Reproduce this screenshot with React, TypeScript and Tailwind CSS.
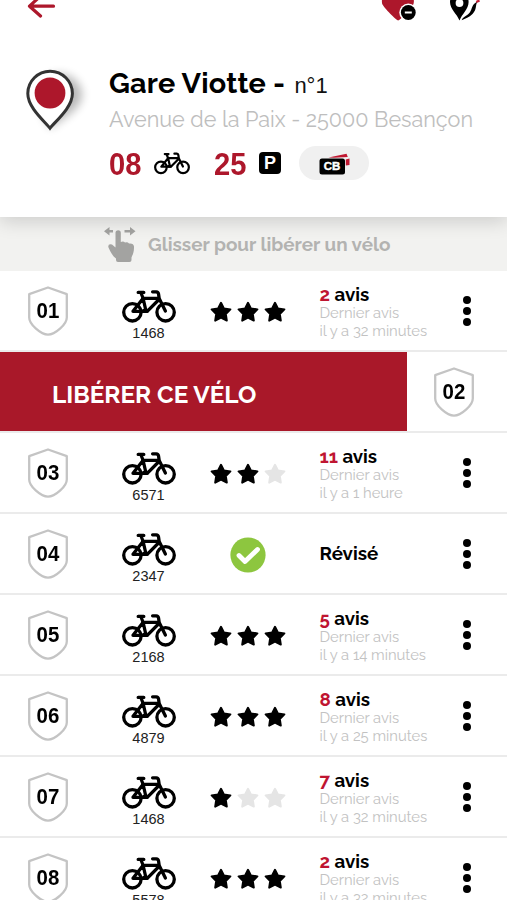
import React from "react";

const raleway = "font-['Raleway','Lato',sans-serif]";

function Bike({ className }: { className: string }) {
  return (
    <svg viewBox="0 0 54 33" className={className} fill="none" stroke="#000" strokeWidth="3.3" strokeLinecap="round" strokeLinejoin="round">
      <circle cx="10.4" cy="22.3" r="8.7" />
      <circle cx="43.6" cy="22.3" r="8.7" />
      <path d="M16.2 2.4h5.6M19 3L21 8 24 21M20.5 8.4H36.5M36.5 10L25.2 21.3H11L20.2 9.5M30.6 1.8h3.6q2 .2 2.3 2L37.2 8.5l6.2 12.5" />
      <path d="M22 20.8h3" strokeWidth="4.2" />
    </svg>
  );
}

function Shield({ n }: { n: string }) {
  return (
    <div className="grid h-[50px] w-10 shrink-0 place-items-center">
      <svg viewBox="0 0 40 50" className="col-start-1 row-start-1 h-[50px] w-10" fill="none" stroke="#c4c4c4" strokeWidth="2.3" strokeLinejoin="round">
        <path d="M20 1.5L38.8 8.2V31.5C38.8 38.5 27 48.7 20 48.7C13 48.7 1.2 38.5 1.2 31.5V8.2Z" />
      </svg>
      <span className="col-start-1 row-start-1 mt-px scale-x-[0.95] text-[21.5px] font-bold leading-none">{n}</span>
    </div>
  );
}

function Star({ on }: { on: boolean }) {
  return (
    <svg viewBox="0 0 22 22" className={on ? "h-[22px] w-[22px] fill-black stroke-black" : "h-[22px] w-[22px] fill-[#e5e5e5] stroke-[#e5e5e5]"} strokeWidth="2" strokeLinejoin="round">
      <path d="M11 1.8L13.9 7.4L20.4 8.4L15.8 13L16.8 19.6L11 16.7L5.2 19.6L6.2 13L1.6 8.4L8.1 7.4Z" />
    </svg>
  );
}

type Row = { n: string; id: string; stars: number; avis?: string; ago?: string };

function BikeRow({ row }: { row: Row }) {
  return (
    <div className="flex h-[81px] shrink-0 items-start border-b-2 border-[#ebebeb] pl-7">
      <div className="pt-[15px]">
        <Shield n={row.n} />
      </div>
      <div className="ml-[53.5px] flex w-[54px] shrink-0 flex-col items-center pt-[19px]">
        <Bike className="h-[33px] w-[54px]" />
        <span className="mt-[2px] text-[14.5px] leading-4 text-[#222]">{row.id}</span>
      </div>
      <div className="ml-[34.5px] flex h-[81px] w-[76px] shrink-0 items-center justify-center gap-[5px]">
        {row.avis ? (
          [0, 1, 2].map((i) => <Star key={i} on={i < row.stars} />)
        ) : (
          <svg viewBox="0 0 36 36" className="h-9 w-9">
            <circle cx="18" cy="18" r="17.6" fill="#8dc63f" />
            <path d="M9 18.5l6 6L27.5 12.5" fill="none" stroke="#fff" strokeWidth="4.8" strokeLinecap="round" strokeLinejoin="round" />
          </svg>
        )}
      </div>
      <div className={`ml-[33.5px] w-[130px] shrink-0 ${raleway}`}>
        {row.avis ? (
          <div className="pt-[13px]">
            <p className="text-[18.7px] font-bold leading-[20px]">
              <span className="text-[#bf1531]">{row.avis}</span> avis
            </p>
            <p className="text-[14.8px] leading-[17.5px] text-[#c2c2c2]">Dernier avis</p>
            <p className="text-[14.8px] leading-[17.5px] text-[#c2c2c2]">{row.ago}</p>
          </div>
        ) : (
          <p className="pt-[27px] text-[18.8px] font-bold leading-6">Révisé</p>
        )}
      </div>
      <div className="ml-[13px] flex h-[80px] flex-col items-center justify-center gap-[3px]">
        <i className="h-2 w-2 rounded-full bg-black" />
        <i className="h-2 w-2 rounded-full bg-black" />
        <i className="h-2 w-2 rounded-full bg-black" />
      </div>
    </div>
  );
}

const rows: Row[] = [
  { n: "03", id: "6571", stars: 2, avis: "11", ago: "il y a 1 heure" },
  { n: "04", id: "2347", stars: 0 },
  { n: "05", id: "2168", stars: 3, avis: "5", ago: "il y a 14 minutes" },
  { n: "06", id: "4879", stars: 3, avis: "8", ago: "il y a 25 minutes" },
  { n: "07", id: "1468", stars: 1, avis: "7", ago: "il y a 32 minutes" },
  { n: "08", id: "5578", stars: 3, avis: "2", ago: "il y a 32 minutes" },
];

export default function App() {
  return (
    <div className="flex h-[900px] w-[507px] flex-col overflow-hidden bg-white font-['Liberation_Sans',Arial,sans-serif] text-black">
      <header className="relative z-10 h-[217px] shrink-0 bg-white shadow-[0_4px_18px_rgba(0,0,0,0.16)]">
        <div className="flex h-6 items-start pl-[27px]">
          <svg viewBox="0 0 30 20" className="h-5 w-[30px]" fill="none" stroke="#ad172b" strokeWidth="3.2" strokeLinecap="round">
            <path d="M26.5 6.2H2.5M13.5 -4L2.5 6.2L13.5 16" strokeLinejoin="round" />
          </svg>
          <svg viewBox="0 0 36 22" className="ml-[324px] h-[22px] w-9">
            <path d="M17.2 20.5C15.5 20.5 3 8 1.2 4C-1-5 8-12 16-4C25-12 35-5 32.5 4C31 8 19 20.5 17.2 20.5Z" fill="#ad172b" />
            <circle cx="27.3" cy="12.5" r="9" fill="#fff" />
            <circle cx="27.3" cy="12.5" r="7.4" fill="#000" />
            <path d="M23.8 12.5h7" stroke="#fff" strokeWidth="2" />
          </svg>
          <svg viewBox="0 0 34 22" className="ml-8 h-[22px] w-[34px]">
            <path d="M10.5 20.5C8 14 1 9 1 2A9.3 9.3 0 0 1 19.6 2C19.6 9 13 14 10.5 20.5Z" fill="#000" />
            <circle cx="10.5" cy="3" r="3.9" fill="#fff" />
            <path d="M12.6 20.3C13.4 17.6 16 16.5 18.5 14.8C23 11.5 22 7.5 25 4L28.5 1.3C26 6 28 9.5 23.5 14C20 17.5 16.5 18.2 12.6 20.3Z" fill="#000" />
            <path d="M27.3 2L30.5 .5" stroke="#c51b35" strokeWidth="2.4" />
          </svg>
        </div>
        <div className="flex items-start pl-[18px] pt-9">
          <svg viewBox="0 0 80 80" className="h-20 w-20">
            <defs>
              <filter id="soft" x="-50%" y="-50%" width="200%" height="200%">
                <feGaussianBlur stdDeviation="5" />
              </filter>
            </defs>
            <path d="M32 69C31 62 20 51 20 38A22 22 0 0 1 64 34C64 51 40 60 32 69Z" fill="#000" opacity=".28" filter="url(#soft)" />
            <path d="M32 68.2C27.5 62 9.8 48 9.8 33.5A22.2 22.2 0 0 1 54.4 33.5C54.4 48 36.5 62 32 68.2Z" fill="#fff" stroke="#333" strokeWidth="3" />
            <circle cx="32" cy="33" r="15.4" fill="#ad172b" />
          </svg>
          <div className="pl-[11px]">
            <h1 className={`h-9 whitespace-nowrap pt-[5px] text-[28.8px] font-bold leading-9 tracking-[0.2px] ${raleway}`}>
              Gare Viotte -{" "}
              <span className="ml-0.5 font-['Liberation_Sans'] text-[22px] font-normal tracking-normal text-[#111]">n°1</span>
            </h1>
            <p className={`mt-[10px] h-7 whitespace-nowrap text-[21.6px] leading-7 text-[#bebebe] ${raleway}`}>Avenue de la Paix - 25000 Besançon</p>
            <div className="mt-[12px] flex h-[34px] items-center text-[31px] font-bold leading-none text-[#ad172b]">
              <span className="w-[45px] origin-left scale-x-[0.94] pt-0.5">08</span>
              <Bike className="mt-px h-[23px] w-9" />
              <span className="ml-[24px] w-[45px] origin-left scale-x-[0.94] pt-0.5">25</span>
              <span className="flex h-[22px] w-[22px] items-center justify-center rounded-[4px] bg-black text-[18px] leading-none text-white">P</span>
              <span className="ml-[18px] flex h-[34px] w-[70px] items-center justify-center rounded-full bg-[#f0f0f0]">
                <svg viewBox="0 0 31 22" className="mt-px h-[22px] w-[31px]">
                  <path d="M9.5 4.6L27.5 .8L28.8 4L15 4.8Z" fill="#c01831" />
                  <path d="M26.8 6.5l3.7-1v6.5l-3.7 .5z" fill="#c01831" />
                  <rect x=".5" y="5.5" width="25.5" height="16" rx="2.5" fill="#000" />
                  <text x="13" y="17.4" textAnchor="middle" fill="#fff" stroke="#fff" strokeWidth=".4" fontSize="11.5" fontWeight="700" fontFamily="Liberation Sans">CB</text>
                </svg>
              </span>
            </div>
          </div>
        </div>
      </header>

      <div className="flex h-[54px] shrink-0 items-center bg-[#f2f2f0] pl-[104px]">
        <svg viewBox="0 0 32 36" className="mt-0.5 h-9 w-8" fill="#a3a3a1">
          <path d="M0 4.2L5.5 0V3H9V5.4H5.5V8.4Z M31.5 4.2L26 0V3H20.5V5.4H26V8.4Z" />
          <path d="M11.5 5.8Q11.5 3.2 14.2 3.2Q16.8 3.2 16.8 5.8V15Q19.5 13.7 21 15.6Q23.5 14.5 25 16.6Q29.5 16 30 19.5C30.2 25 28.5 28 27.5 30.5V33Q27.5 35 25.5 35H14Q12 35 12 33V31.5C8 28.5 6 24 4.3 20Q4 16.2 8 17.5L11.5 20.5Z" />
        </svg>
        <span className={`ml-3 whitespace-nowrap text-[18.9px] font-bold text-[#b3b3b1] ${raleway}`}>Glisser pour libérer un vélo</span>
      </div>

      <BikeRow row={{ n: "01", id: "1468", stars: 3, avis: "2", ago: "il y a 32 minutes" }} />
      <div className="flex h-[81px] shrink-0 border-b-2 border-[#ebebeb]">
        <div className={`flex w-[407px] shrink-0 items-center bg-[#a91829] pl-[52px] pt-[7px] text-[24.3px] font-bold text-white ${raleway}`}>LIBÉRER CE VÉLO</div>
        <div className="pl-[27px] pt-[15px]">
          <Shield n="02" />
        </div>
      </div>
      {rows.map((row) => (
        <BikeRow key={row.n} row={row} />
      ))}
    </div>
  );
}
